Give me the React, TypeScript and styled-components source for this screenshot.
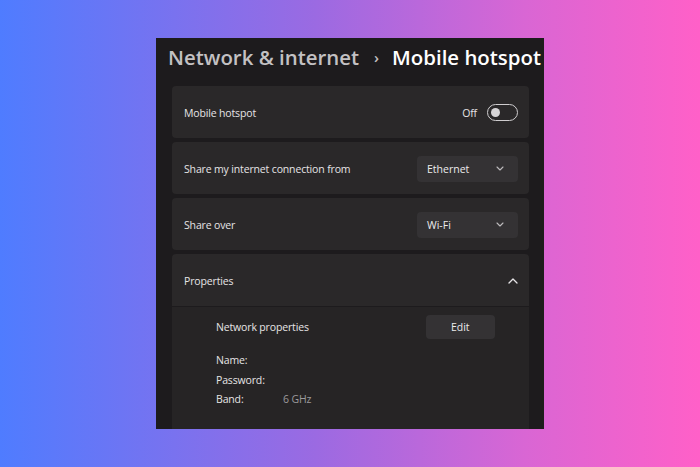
import React from "react";
import styled, { createGlobalStyle } from "styled-components";

const GlobalStyle = createGlobalStyle`
  html, body {
    margin: 0;
    padding: 0;
  }
  body {
    font-family: "Open Sans", "Noto Sans", sans-serif;
  }
`;

const Backdrop = styled.div`
  width: 700px;
  height: 467px;
  display: flex;
  align-items: center;
  justify-content: center;
  background: linear-gradient(90deg, #4f7cff 0%, #9b6ae2 45%, #d966d4 75%, #ff60c8 100%);
`;

const Window = styled.div`
  width: 388px;
  height: 391px;
  background: #1d1b1d;
  overflow: hidden;
  box-sizing: border-box;
  padding: 0 15px 0 16px;
`;

const Breadcrumb = styled.div`
  display: flex;
  align-items: center;
  white-space: nowrap;
  height: 38px;
  margin: 0 0 10px -4px;
  font-size: 20.4px;
  font-weight: 600;
`;

const Crumb = styled.span<{ current?: boolean }>`
  color: ${(p) => (p.current ? "#ffffff" : "#c3c1c3")};
`;

const Separator = styled.span`
  color: #c3c1c3;
  font-size: 15px;
  margin: 0 13px 0 15px;
`;

const Card = styled.div`
  background: #2a2829;
  border-radius: 4px;
  margin-bottom: 4px;
`;

const Row = styled.div`
  height: 52px;
  display: flex;
  align-items: center;
  justify-content: space-between;
  padding: 1px 11px 0 12px;
  box-sizing: border-box;
`;

const Label = styled.span`
  color: #e6e4e6;
  font-size: 10.5px;
  letter-spacing: -0.15px;
`;

const ToggleWrap = styled.div`
  display: flex;
  align-items: center;
  gap: 10px;
`;

const Switch = styled.div`
  width: 31px;
  height: 17px;
  box-sizing: border-box;
  border: 1px solid #cfcdcf;
  border-radius: 9px;
  display: flex;
  align-items: center;
  padding-left: 3px;
`;

const Knob = styled.div`
  width: 9px;
  height: 9px;
  border-radius: 50%;
  background: #d6d4d6;
`;

const Dropdown = styled.div`
  width: 101px;
  height: 26px;
  box-sizing: border-box;
  background: #343234;
  border-radius: 4px;
  display: flex;
  align-items: center;
  justify-content: space-between;
  padding: 0 14px 0 10px;
  color: #ecebec;
  font-size: 10.5px;
  font-weight: 500;
`;

const Expanded = styled.div`
  background: #262425;
  border-top: 1px solid #1d1b1d;
  padding: 8px 0 40px 44px;
  border-radius: 0 0 4px 4px;
`;

const PropHead = styled.div`
  display: flex;
  align-items: center;
  height: 24px;
  margin-bottom: 14px;
`;

const EditButton = styled.div`
  margin-left: 117px;
  width: 69px;
  height: 24px;
  border-radius: 4px;
  background: #343234;
  color: #ecebec;
  font-size: 10.5px;
  font-weight: 500;
  display: flex;
  align-items: center;
  justify-content: center;
`;

const Detail = styled.div`
  display: grid;
  grid-template-columns: 67px auto;
  row-gap: 4px;
  font-size: 10.5px;
  letter-spacing: -0.15px;
  line-height: 15.5px;
  color: #e6e4e6;
`;

const Value = styled.span`
  color: #9c9a9c;
`;

const ChevronDown = () => (
  <svg width="8" height="5" viewBox="0 0 8 5" fill="none">
    <path d="M1 1 L4 4 L7 1" stroke="#bdbbbd" strokeWidth="1.1" strokeLinecap="round" strokeLinejoin="round" />
  </svg>
);

const ChevronUp = () => (
  <svg width="10" height="6" viewBox="0 0 10 6" fill="none">
    <path d="M1 5 L5 1 L9 5" stroke="#e6e4e6" strokeWidth="1.3" strokeLinecap="round" strokeLinejoin="round" />
  </svg>
);

export default function App() {
  return (
    <>
      <GlobalStyle />
      <Backdrop>
        <Window>
          <Breadcrumb>
            <Crumb>Network &amp; internet</Crumb>
            <Separator>›</Separator>
            <Crumb current>Mobile hotspot</Crumb>
          </Breadcrumb>

          <Card>
            <Row>
              <Label>Mobile hotspot</Label>
              <ToggleWrap>
                <Label>Off</Label>
                <Switch>
                  <Knob />
                </Switch>
              </ToggleWrap>
            </Row>
          </Card>

          <Card>
            <Row>
              <Label>Share my internet connection from</Label>
              <Dropdown>
                Ethernet
                <ChevronDown />
              </Dropdown>
            </Row>
          </Card>

          <Card>
            <Row>
              <Label>Share over</Label>
              <Dropdown>
                Wi-Fi
                <ChevronDown />
              </Dropdown>
            </Row>
          </Card>

          <Card>
            <Row>
              <Label>Properties</Label>
              <ChevronUp />
            </Row>
            <Expanded>
              <PropHead>
                <Label>Network properties</Label>
                <EditButton>Edit</EditButton>
              </PropHead>
              <Detail>
                <span>Name:</span>
                <span />
                <span>Password:</span>
                <span />
                <span>Band:</span>
                <Value>6 GHz</Value>
              </Detail>
            </Expanded>
          </Card>
        </Window>
      </Backdrop>
    </>
  );
}
